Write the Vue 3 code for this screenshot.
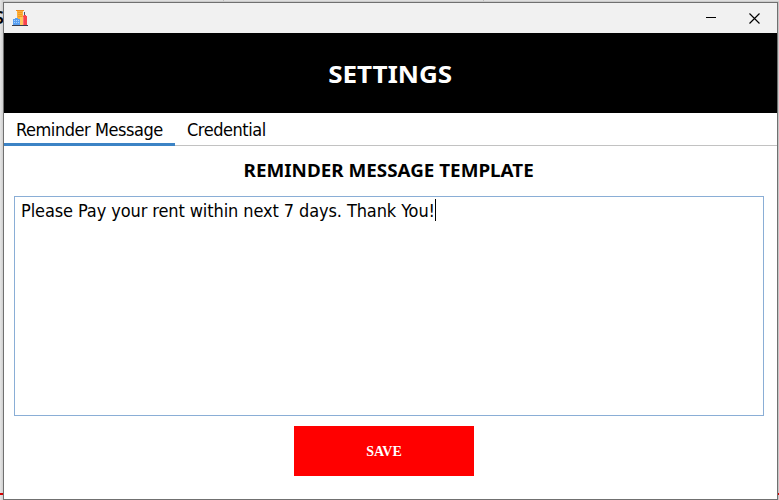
<script setup>
import { ref } from 'vue'

const tabs = ['Reminder Message', 'Credential']
const active = ref(0)
const message = ref('Please Pay your rent within next 7 days. Thank You!')
</script>

<template>
  <div class="desktop">
    <span class="behind-text">S</span>
    <i class="redline"></i>
    <i class="edge"></i>
    <i class="tick first"></i>
    <i class="tick second"></i>
    <main class="window">
      <header class="titlebar">
        <svg class="app-icon" width="16" height="16" viewBox="0 0 16 16">
          <path fill="#fbb03b" d="M5 1h6v14H5z" />
          <path fill="#f28a1c" d="M4 0h8v1H4z" />
          <path stroke="#f59a23" d="M6 2.5h4M6 4.5h4M6 6.5h4" />
          <path fill="#ffc65c" d="M8 7h3v8H8z" />
          <path fill="#5a9ff0" d="M3 8h3v1h2v6H1V9h2z" />
          <path stroke="#a8d2ff" stroke-dasharray="1 1" d="M2 10.5h5M2 12.5h5" />
          <path fill="#f8434c" d="M11 6l1-1h2v1v9h-3z" />
          <path fill="#fb6a70" d="M11 7h1v8h-1z" />
          <path stroke="#4b5366" d="M12.5 2v3" />
          <path fill="#f8434c" d="M14 6h1v9h-1z" />
          <path stroke="#383c4b" d="M0 15.5h16" />
        </svg>
        <div class="controls">
          <svg width="10" height="10" viewBox="0 0 10 10"><path d="M0 4.5h10" stroke="#000" /></svg>
          <svg width="11" height="11" viewBox="0 0 11 11"><path d="M.5 .5l10 10M10.5 .5l-10 10" stroke="#000" stroke-width="1.15" /></svg>
        </div>
      </header>
      <h1 class="banner"><span>SETTINGS</span></h1>
      <nav class="tabs">
        <button
          v-for="(tab, i) in tabs"
          :key="tab"
          class="tab"
          :class="{ active: active === i }"
          @click="active = i"
        >{{ tab }}</button>
      </nav>
      <section class="panel">
        <h2 class="heading"><span>REMINDER MESSAGE TEMPLATE</span></h2>
        <div class="editor"><span class="message">{{ message }}</span><i class="caret"></i></div>
        <button class="save">SAVE</button>
      </section>
    </main>
  </div>
</template>

<style>
body { margin: 0; overflow: hidden; }
</style>

<style scoped>
* { box-sizing: border-box; }
.desktop {
  position: relative;
  width: 779px;
  height: 500px;
  padding: 2px 1px 0 3px;
  overflow: hidden;
  background: linear-gradient(90deg, #e6e6e6 0, #cfcfcf 3px, #d4d4d4 776px, #c4c4c4 779px);
  font-family: "Noto Sans", "DejaVu Sans", sans-serif;
  color: #000;
}
.behind-text { position: absolute; left: -6px; top: 5px; font-size: 18px; line-height: 24px; font-weight: 600; }
.redline { position: absolute; left: 0; top: 493px; width: 779px; height: 2px; background: #d40000; }
.edge { position: absolute; left: 4px; right: 0; top: 0; height: 2px; background: linear-gradient(#dedede 50%, #cbcbcb 50%); }
.tick { position: absolute; top: 0; width: 1px; height: 1px; background: #bcbcbc; }
.tick.first { left: 223px; }
.tick.second { left: 483px; }
.window {
  position: relative;
  display: flex;
  flex-direction: column;
  width: 775px;
  height: 498px;
  border: 1px solid #707070;
  background: #fff;
}
.titlebar {
  display: flex;
  justify-content: space-between;
  align-items: center;
  height: 30px;
  padding: 0 17px 0 8px;
  background: #f1f1f1;
}
.app-icon { display: block; }
.controls { display: flex; align-items: center; gap: 33px; }
.controls svg { display: block; }
.banner {
  display: flex;
  justify-content: center;
  height: 80px;
  margin: 0;
  background: #000;
  color: #fff;
  font-size: 24px;
  line-height: 82px;
}
.banner span { transform: scaleX(1.085); }
.tabs {
  display: flex;
  height: 33px;
  background: linear-gradient(#c2c2c2, #c2c2c2) bottom / 100% 1px no-repeat;
}
.tab {
  width: 102px;
  padding: 0 0 0 12px;
  border: 0;
  border-bottom: 3px solid transparent;
  background: none;
  color: #000;
  font: 18px/34px "DejaVu Sans Condensed", "DejaVu Sans", sans-serif;
  font-stretch: condensed;
  text-align: left;
  white-space: nowrap;
  letter-spacing: -0.45px;
}
.tab.active { width: 171px; border-bottom-color: #3c83c5; }
.panel {
  display: flex;
  flex-direction: column;
  padding: 0 13px 0 10px;
}
.heading {
  display: flex;
  justify-content: center;
  height: 50px;
  margin: 0;
  font-size: 18px;
  line-height: 48px;
  white-space: nowrap;
}
.heading span { transform: scaleX(1.046); }
.editor {
  display: flex;
  height: 220px;
  padding: 2px 6px;
  border: 1px solid #8aaed6;
  font-family: "DejaVu Sans Condensed", "DejaVu Sans", sans-serif;
  font-stretch: condensed;
  font-size: 18px;
  line-height: 24px;
  white-space: nowrap;
}
.message { letter-spacing: -0.1px; }
.caret { width: 1px; height: 22px; background: #000; }
.save {
  align-self: center;
  width: 180px;
  height: 50px;
  margin: 10px 10px 0 0;
  padding: 0;
  border: 0;
  background: #f00;
  color: #fff;
  font: bold 14px/52px "Liberation Serif", serif;
}
</style>
